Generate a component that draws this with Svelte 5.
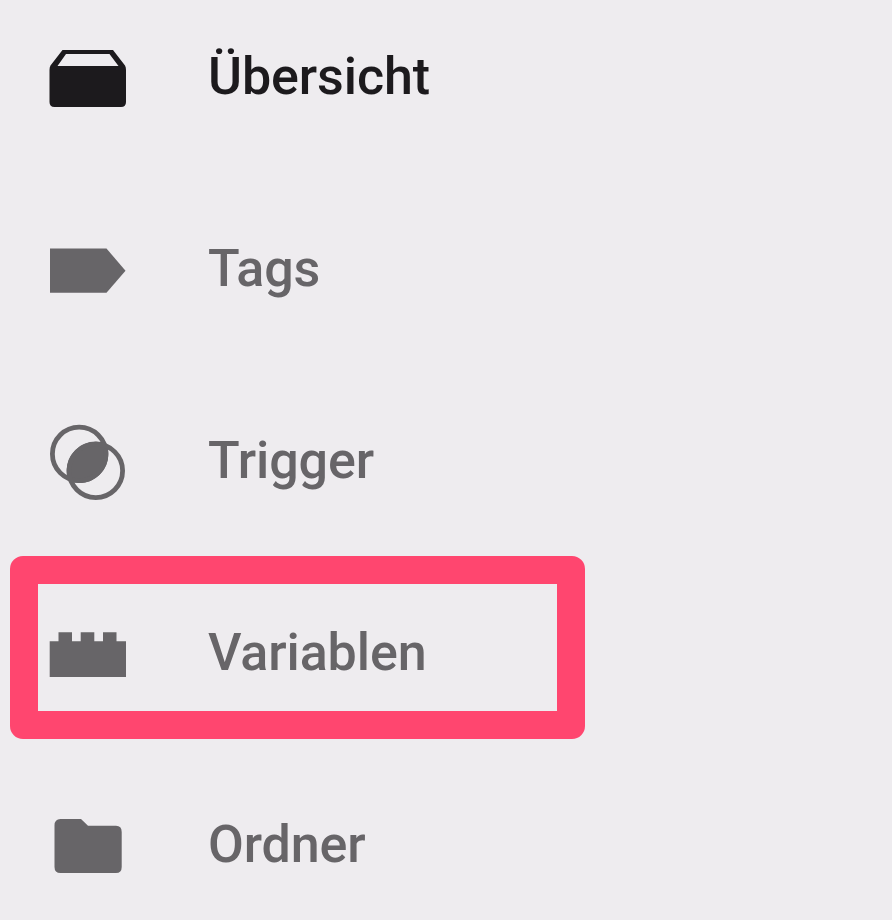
<script>
    let active = 'overview';
    const highlighted = 'variables';

    const items = [
        {
            id: 'overview',
            label: 'Übersicht',
            path: 'M22.5 22H73L85 37.5Q86 39 86 42V74Q86 79 81 79H14.5Q9.5 79 9.5 74V42Q9.5 39 10.5 37.5ZM26 26L17.5 38H78.5L69.5 26Z'
        },
        {
            id: 'tags',
            label: 'Tags',
            path: 'M10 28.5H66.5L85.5 50.8L66.5 72.7H10Z'
        },
        {
            id: 'trigger',
            label: 'Trigger',
            path: 'M28.5 69A29.2 29.2 0 0 1 66.5 31.7A29.2 29.2 0 0 1 28.5 69Z',
            rings: [[39.2, 41.9], [55.8, 58.8]]
        },
        {
            id: 'variables',
            label: 'Variablen',
            path: 'M9.7 37.3H18.5V28.2H32V37.3H40.7V28.2H54.3V37.3H63V28.2H76.5V37.3H86V73H9.7Z'
        },
        {
            id: 'folders',
            label: 'Ordner',
            path: 'M20.5 23H41L48 29.7H76Q81.7 29.7 81.7 36V71Q81.7 77 76 77H20.5Q14.5 77 14.5 71V29.5Q14.5 23 20.5 23Z'
        }
    ];
</script>

<nav>
    {#each items as item (item.id)}
        <button class="item" class:active={active === item.id} on:click={() => active = item.id}>
            <svg class="icon" viewBox="0 0 96 96" aria-hidden="true">
                <path d={item.path} fill="currentColor" fill-rule="evenodd" />
                {#each item.rings || [] as [cx, cy]}
                    <circle {cx} {cy} r="26.8" fill="none" stroke="currentColor" stroke-width="4.8" />
                {/each}
            </svg>
            <span class="label">{item.label}</span>
            {#if item.id === highlighted}
                <span class="marker"></span>
            {/if}
        </button>
    {/each}
</nav>

<style>
    :global(body){
        background-color: #eeecef;
    }

    nav{
        display: flex;
        flex-direction: column;
        gap: 40px;
        height: 920px;
        overflow: hidden;
    }

    .item{
        position: relative;
        display: flex;
        align-items: center;
        gap: 72px;
        flex: none;
        height: 152px;
        padding: 0 40px;
        border: none;
        background: none;
        color: #676568;
        font-family: Roboto, sans-serif;
        font-size: 52px;
        font-weight: 500;
        letter-spacing: -.1px;
        text-align: left;
        cursor: pointer;
    }

    .item.active{
        color: #1c1a1d;
    }

    .icon{
        flex: none;
        width: 96px;
        height: 96px;
    }

    .label{
        white-space: nowrap;
    }

    .marker{
        position: absolute;
        top: -20.5px;
        left: 9.5px;
        width: 575px;
        height: 183.5px;
        box-sizing: border-box;
        border: 28px solid #ff466f;
        border-radius: 13px;
        pointer-events: none;
    }
</style>
